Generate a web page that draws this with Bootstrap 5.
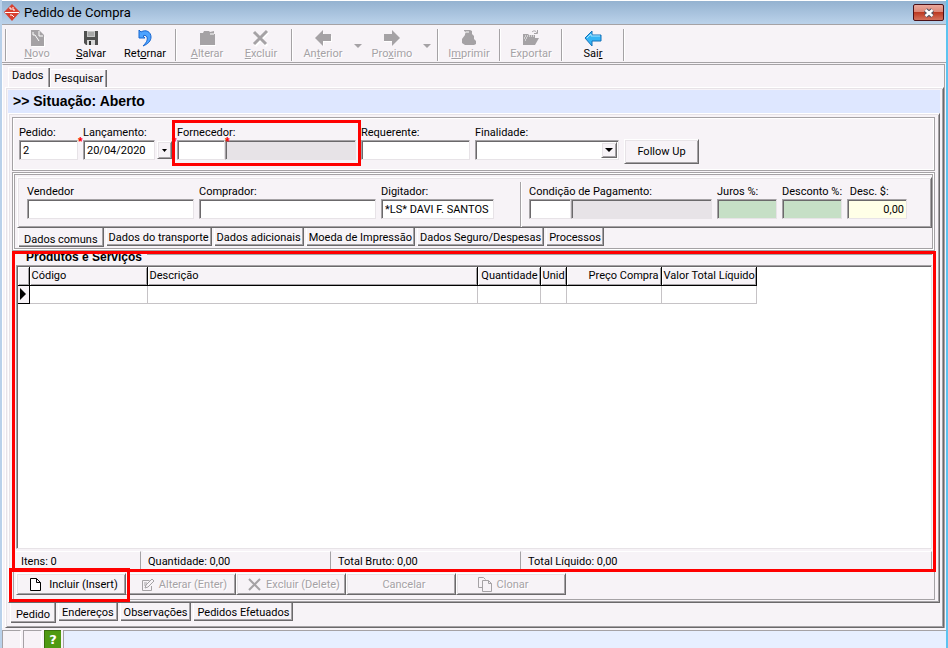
<!DOCTYPE html>
<html lang="pt-BR">
<head>
<meta charset="utf-8">
<meta name="viewport" content="width=device-width, initial-scale=1">
<title>Pedido de Compra</title>
<link href="https://cdn.jsdelivr.net/npm/bootstrap@5.3.0/dist/css/bootstrap.min.css" rel="stylesheet">
<style>
:root{--face:#f7f3f7;--lite:#e7e3e7;--mid:#a5a2a5;--dark:#6b696b;--red:#f00}
body{font-family:Roboto,"Liberation Sans",sans-serif;font-size:11px;line-height:14px;color:#000;background:var(--face);border-left:2px solid #b9d1ea;border-right:2px solid #5cc3f0}
button,input,select{font:inherit;color:inherit;border-radius:0}
.titlebar{height:25px;background:linear-gradient(#fff 1px,#94b2d0 1px,#bbd2ea);border-bottom:1px solid var(--mid);font-size:13px;padding:1px 2px 0}
.close-btn{width:31px;height:17px;border:1px solid #4a1018;border-radius:2px;background:linear-gradient(#eaa79b,#dd8878 45%,#bd3a22 50%,#d4715c)}
.toolbar{height:38px;border-bottom:1px solid var(--mid)}
.tool{width:54px;border:0;background:none;padding:0}
.tool svg,.drop svg{display:block}
.tool:disabled{color:var(--mid);text-shadow:1px 1px #fff}
.drop{width:15px;border:0;background:none;padding:0;color:var(--mid)}
.sep{width:8px;padding:0 3px}
.sep::before{content:"";display:block;height:32px;border-left:1px solid var(--mid);border-right:1px solid #fff}
.frame{margin-top:1px;border-top:1px solid var(--mid);border-right:1px solid var(--mid);border-left:1px solid #fff;margin-right:1px;padding-left:2px}
.top-tabs{height:22px;padding-left:3px}
.tab-btn{border:0;background:var(--face);height:18px;padding:1px 4px 0;white-space:nowrap;box-shadow:inset 1px 1px #fff,inset -1px 0 var(--dark),inset -2px 0 var(--mid)}
.tab-btn.active{height:20px;padding-bottom:3px;padding-right:7px}
.low .tab-btn{height:18px;padding:1px 4px 0;box-shadow:inset 1px 0 #fff,inset -1px -1px var(--dark),inset -2px -2px var(--mid)}
.low .tab-btn.active{height:19px;padding:4px 6px 0}
.raised{border:1px solid;border-color:#fff var(--dark) var(--dark) #fff;box-shadow:inset 1px 1px var(--lite),inset -1px -1px var(--mid)}
.outer-page{padding:2px 3px 1px 2px}
.strip{height:23px;background:#dee7ff;font:bold 14px/23px "Liberation Sans",Arial,sans-serif;padding-left:5px}
.inner-page{padding:3px 4px 2px 3px}
.etched{border:1px solid var(--mid);box-shadow:inset 1px 1px #fff,inset -1px -1px #fff}
.head-panel{height:54px;padding:8px 6px 0}
.fields{gap:5px}
.fields label{display:block;white-space:nowrap;line-height:14px}
.sunk{border:1px solid;border-color:var(--mid) var(--lite) var(--lite) var(--mid);box-shadow:inset 1px 1px var(--dark);background:#fff;height:20px;padding:1px 2px 1px 3px;display:block;min-width:0;outline:0}
.sunk:disabled{background:var(--lite)}
.sunk.green{background:#c6dfc6}.sunk.cream{background:#ffffe7}
.w-59{width:59px}.w-60{width:60px}.w-72{width:72px}.w-109{width:109px}.w-113{width:113px}.w-131{width:131px}.w-144{width:144px}.w-141{width:141px}.w-167{width:167px}.w-177{width:177px}.w-48{width:48px}.w-42{width:42px}
.push{background:var(--face);border:1px solid;border-color:#fff var(--dark) var(--dark) #fff;box-shadow:inset 1px 1px var(--lite),inset -1px -1px var(--mid);padding:0;white-space:nowrap}
.push:disabled{color:var(--mid);text-shadow:1px 1px #fff}
.date-row{gap:2px}
.date-btn{width:15px;height:18px}
.combo{appearance:none;width:100%}
.combo-arrow{position:absolute;right:2px;top:2px;width:16px;height:16px;pointer-events:none}
.follow{width:75px;height:25px;margin-top:13px}
.star{position:absolute;left:100%;top:-2px;color:var(--red);font:bold 12px/8px "Liberation Sans",sans-serif;z-index:1}
.hot{position:relative}
.hot::after{content:"";position:absolute;border:3px solid var(--red);pointer-events:none;z-index:2}
.hot-supplier::after{inset:-6px -5px}
.hot-items::after{inset:0 -2px 27px -2px}
.hot-insert::after{inset:-5px -4px -7px -7px;z-index:3}
.data-panel{margin-top:1px;padding:1px}
.data-box{border:1px solid var(--mid);padding:2px 0 0 2px;height:75px}
.data-page{height:51px;padding:7px 9px 0}
.divider{width:2px;height:45px;border-left:1px solid var(--mid);border-right:1px solid #fff;margin:-3px 2px 0 21px}
.low-inner{padding-left:1px;gap:2px}
.low-inner .tab-btn{padding:1px 3px 0}
.items{margin-left:1px;padding:0 2px;border-left:1px solid var(--mid);border-bottom:1px solid var(--mid);border-right:1px solid var(--mid)}
.items-title{height:14px;font:bold 12px/13px "Liberation Sans",Arial,sans-serif;padding-left:10px}
.items-title::after{content:"";flex:1;margin:3px 0 0 5px;height:1px;background:var(--mid)}
.grid-box{border:1px solid;border-color:var(--mid) var(--lite) var(--lite) var(--mid);box-shadow:inset 1px 1px var(--dark);background:#fff;padding:1px 0 0 1px}
.grid-table{border-collapse:collapse;table-layout:fixed;width:738px}
.grid-table th{height:18px;padding:0 2px;font-weight:400;white-space:nowrap;background:var(--face);border-right:1px solid #000;border-bottom:1px solid #000;box-shadow:inset 1px 1px #fff,inset -1px -1px var(--mid)}
.grid-table td{height:18px;padding:0;border-right:1px solid #c6c3c6;border-bottom:1px solid #c6c3c6}
.grid-table td.marker{background:var(--face);border-color:#000}
.grid-table svg{display:block;margin:auto}
.totals{display:grid;grid-template-columns:125px 188px 188px 1fr;column-gap:2px;height:19px;margin-top:2px}
.totals>div{border-top:1px solid #fff;border-right:1px solid var(--mid);border-bottom:1px solid var(--mid);padding:3px 6px 0 5px;white-space:nowrap}
.actions{padding:3px 0 4px}
.actions .push{width:110px;height:22px;padding-top:1px}
.actions .wide-left{padding-left:6px}
.low-outer{padding:0 0 3px 2px;gap:2px}
.low-outer .tab-btn.active{height:20px}
.statusbar{height:20px;padding-top:2px;gap:2px}
.statusbar>div{border-top:1px solid var(--mid);border-left:1px solid var(--mid)}
.cell{width:19px;border-right:1px solid #fff}
.statusbar .help{width:17px;background:#4f9a12;border-color:#396f0c;color:#fff;font:bold 13px/18px "DejaVu Sans",sans-serif}
.msg{background:#e7efff}
</style>
<script src="https://cdn.jsdelivr.net/npm/bootstrap@5.3.0/dist/js/bootstrap.bundle.min.js"></script>
</head>
<body class="d-flex flex-column min-vh-100">
<header class="titlebar d-flex align-items-center flex-shrink-0">
  <svg width="16" height="17" viewBox="0 0 16 17" class="me-1" aria-hidden="true"><path d="M8 0l8 8-8 9-8-9z" fill="#d84030"/><path d="M1 8.500h14" stroke="#fff"/><path d="M5 4h2v2M9 3v3h2M6 11h2l2 2" stroke="#fff" fill="none"/></svg>
  <span>Pedido de Compra</span>
  <button class="close-btn ms-auto p-0 d-flex align-items-center justify-content-center" aria-label="Fechar"><svg width="12" height="10" viewBox="0 0 12 10"><path d="M2.500 2l7 6M9.500 2l-7 6" stroke="#4d5262" stroke-width="4.500"/><path d="M2.500 2l7 6M9.500 2l-7 6" stroke="#fff" stroke-width="2.500"/></svg></button>
</header>

<div class="toolbar d-flex align-items-start flex-shrink-0 pt-1" role="toolbar" aria-label="Ações">
  <span class="sep"></span>
  <button class="tool" disabled><svg class="mx-auto" width="18" height="18" viewBox="0 0 18 18"><path d="M3 2h8v5h5v10H3z" fill="#fff" transform="translate(1 1)"/><path d="M3 1h8l5 5v11H3z" fill="#a5a2a5"/><path d="M5 3v3h2l4 6M11 2v5h4" stroke="#fff" fill="none"/></svg><u>N</u>ovo</button>
  <button class="tool"><svg class="mx-auto" width="18" height="18" viewBox="0 0 18 18"><path d="M2 2h14v14H4l-2-2z" fill="#505050"/><path d="M5 2h8v6H5z" fill="#c8c8c8"/><path d="M6 4h6M6 6h6" stroke="#888"/><path d="M5 11h8v5H5z" fill="#d8d8d8"/><path d="M7 12h2v4H7z" fill="#333"/></svg><u>S</u>alvar</button>
  <button class="tool"><svg class="mx-auto" width="18" height="18" viewBox="0 0 18 18"><path d="M3 1l2 2c5-3 10 0 10 5 0 4-3 7-8 9 3-3 5-6 4-9-1-2-3-2-4-1l2 2H3z" fill="#4da3ff" stroke="#1766d0"/></svg>Ret<u>o</u>rnar</button>
  <span class="sep"></span>
  <button class="tool" disabled><svg class="mx-auto" width="18" height="18" viewBox="0 0 18 18"><path d="M2 4h3l1-2h5l1 1 4-1v3h1v11H2z" fill="#a5a2a5"/><path d="M12 5h4M3 16.500h15" stroke="#fff"/></svg><u>A</u>lterar</button>
  <button class="tool" disabled><svg class="mx-auto" width="18" height="18" viewBox="0 0 18 18"><path d="M3 4l12 13M16 3L3 17" stroke="#fff" stroke-width="3"/><path d="M2 3l12 12M15 2L2 15" stroke="#a5a2a5" stroke-width="3"/></svg><u>E</u>xcluir</button>
  <span class="sep"></span>
  <button class="tool" disabled><svg class="mx-auto" width="18" height="18" viewBox="0 0 18 18"><path d="M2 10l8-7v4h8v6h-8v4z" fill="#fff"/><path d="M1 9l8-8v4h8v7H9v5z" fill="#a5a2a5"/></svg>An<u>t</u>erior</button>
  <button class="drop align-self-center" disabled aria-label="Opções de anterior"><svg class="mx-auto" width="8" height="4"><path d="M0 0h8L4 4z" fill="#a5a2a5"/></svg></button>
  <button class="tool" disabled><svg class="mx-auto" width="18" height="18" viewBox="0 0 18 18"><path d="M17 10l-8-7v4H1v6h8v4z" fill="#fff"/><path d="M17 9L9 1v4H1v7h8v5z" fill="#a5a2a5"/></svg>Pro<u>x</u>imo</button>
  <button class="drop align-self-center" disabled aria-label="Opções de próximo"><svg class="mx-auto" width="8" height="4"><path d="M0 0h8L4 4z" fill="#a5a2a5"/></svg></button>
  <span class="sep"></span>
  <button class="tool" disabled><svg class="mx-auto" width="18" height="18" viewBox="0 0 18 18"><path d="M4 1h6l2 1v3l2 2v3l2 2v3l-2 1H5l-3-2v-4l3-4V5l1-2-2-1z" fill="#a5a2a5"/><path d="M6 3h3" stroke="#fff"/></svg>I<u>m</u>primir</button>
  <span class="sep"></span>
  <button class="tool" disabled><svg class="mx-auto" width="18" height="18" viewBox="0 0 18 18"><path d="M1 5h5l1 1h6v3h4l-4 7H1z" fill="#a5a2a5"/><path d="M3 7h9M2 9h3M3 11h2" stroke="#fff" stroke-dasharray="1 1"/><path d="M10 3c2-2 4-1 5 1M15.500 1v3.500H12" stroke="#a5a2a5" fill="none"/></svg>Exportar</button>
  <span class="sep"></span>
  <button class="tool"><svg class="mx-auto" width="18" height="18" viewBox="0 0 18 18"><path d="M1 9l7-7v4h9v6H8v5z" fill="#35b5f5" stroke="#1471b8"/><path d="M3 9l4-4v2h9" stroke="#a5e4ff" fill="none"/></svg>Sai<u>r</u></button>
  <span class="sep"></span>
</div>

<main class="frame d-flex flex-column flex-grow-1">
  <div class="top-tabs d-flex align-items-end" role="tablist">
    <button class="tab-btn active" role="tab" aria-selected="true">Dados</button>
    <button class="tab-btn" role="tab" aria-selected="false">Pesquisar</button>
  </div>
  <section class="raised outer-page d-flex flex-column flex-grow-1">
    <h1 class="strip m-0">&gt;&gt; Situação: Aberto</h1>
    <div class="raised inner-page d-flex flex-column flex-grow-1">

      <form class="etched head-panel fields d-flex align-items-start">
        <div><label for="pedido">Pedido:</label><div class="position-relative"><input id="pedido" class="sunk w-59" value="2" autofocus><span class="star">*</span></div></div>
        <div><label for="lanc">Lançamento:</label><div class="position-relative date-row d-flex align-items-center"><input id="lanc" class="sunk w-72" value="20/04/2020"><button type="button" class="push date-btn d-flex align-items-center justify-content-center" aria-label="Abrir calendário"><svg width="5" height="3"><path d="M0 0h5L2.500 3z"/></svg></button><span class="star">*</span></div></div>
        <div class="hot hot-supplier"><label for="forn">Fornecedor:</label><div class="d-flex"><div class="position-relative"><input id="forn" class="sunk w-48"><span class="star">*</span></div><input class="sunk w-131" disabled aria-label="Nome do fornecedor"></div></div>
        <div><label for="req">Requerente:</label><input id="req" class="sunk w-109"></div>
        <div><label for="fin">Finalidade:</label><div class="position-relative w-144"><select id="fin" class="sunk combo"><option></option></select><span class="push combo-arrow d-flex align-items-center justify-content-center"><svg width="8" height="4"><path d="M0 0h8L4 4z"/></svg></span></div></div>
        <button type="button" class="push follow">Follow Up</button>
      </form>

      <div class="etched data-panel">
        <div class="data-box">
          <form class="raised data-page fields d-flex">
            <div><label for="vend">Vendedor</label><input id="vend" class="sunk w-167"></div>
            <div><label for="comp">Comprador:</label><input id="comp" class="sunk w-177"></div>
            <div><label for="dig">Digitador:</label><input id="dig" class="sunk w-113" value="*LS* DAVI F. SANTOS"></div>
            <div class="divider"></div>
            <div><label for="cond">Condição de Pagamento:</label><div class="d-flex"><input id="cond" class="sunk w-42"><input class="sunk w-141" disabled aria-label="Descrição da condição"></div></div>
            <div class="w-60"><label for="juros">Juros %:</label><input id="juros" class="sunk green w-60"></div>
            <div class="w-60"><label for="desp">Desconto %:</label><input id="desp" class="sunk green w-60"></div>
            <div class="w-60"><label for="desv">&nbsp;Desc. $:</label><input id="desv" class="sunk cream w-60 text-end" value="0,00"></div>
          </form>
          <div class="low low-inner d-flex" role="tablist">
            <button class="tab-btn active" role="tab" aria-selected="true">Dados comuns</button>
            <button class="tab-btn" role="tab">Dados do transporte</button>
            <button class="tab-btn" role="tab">Dados adicionais</button>
            <button class="tab-btn" role="tab">Moeda de Impressão</button>
            <button class="tab-btn" role="tab">Dados Seguro/Despesas</button>
            <button class="tab-btn" role="tab">Processos</button>
          </div>
        </div>
      </div>

      <section class="items hot hot-items d-flex flex-column flex-grow-1">
        <h2 class="items-title d-flex m-0">Produtos e Serviços</h2>
        <div class="grid-box flex-grow-1">
          <table class="grid-table">
            <colgroup><col style="width:11px"><col style="width:118px"><col style="width:330px"><col style="width:63px"><col style="width:26px"><col style="width:95px"><col style="width:95px"></colgroup>
            <thead><tr><th></th><th>Código</th><th>Descrição</th><th class="text-end">Quantidade</th><th>Unid</th><th class="text-end">Preço Compra</th><th class="text-end">Valor Total Líquido</th></tr></thead>
            <tbody><tr><td class="marker"><svg width="6" height="12"><path d="M0 0l6 6-6 6z"/></svg></td><td></td><td></td><td></td><td></td><td></td><td></td></tr></tbody>
          </table>
        </div>
        <div class="totals"><div>Itens: 0</div><div>Quantidade: 0,00</div><div>Total Bruto: 0,00</div><div>Total Líquido: 0,00</div></div>
        <div class="actions d-flex">
          <div class="hot hot-insert"><button class="push wide-left d-flex align-items-center justify-content-center gap-1"><svg width="11" height="13" viewBox="0 0 11 13" class="me-1"><path d="M.5.5h6l4 4v8H.5zM6.500.5v4h4" fill="#fff" stroke="#000"/></svg>Incluir (Insert)</button></div>
          <button class="push wide-left d-flex align-items-center justify-content-center gap-1" disabled><svg width="14" height="14" viewBox="0 0 14 14"><path d="M8.500 2.500H1.500v10h9V8M4 10l1-3 6-6 2 2-6 6zM3 5h3M3 7h2" fill="none" stroke="#a5a2a5"/></svg>Alterar (Enter)</button>
          <button class="push wide-left d-flex align-items-center justify-content-center gap-1" disabled><svg width="14" height="13" viewBox="0 0 14 13"><path d="M1 1l11 11M12 1L1 12" fill="none" stroke="#a5a2a5" stroke-width="2"/></svg>Excluir (Delete)</button>
          <button class="push wide-left" disabled>Cancelar</button>
          <button class="push d-flex align-items-center justify-content-center gap-1 pe-3" disabled><svg width="15" height="15" viewBox="0 0 15 15"><path d="M4.500 10.500h-4V.5h5l2 2M4.500 3.500h6l3 3v8h-9zM10.500 3.500v3h3" fill="none" stroke="#a5a2a5"/></svg>Clonar</button>
        </div>
      </section>
    </div>
    <div class="low low-outer d-flex" role="tablist">
      <button class="tab-btn active" role="tab" aria-selected="true">Pedido</button>
      <button class="tab-btn" role="tab">Endereços</button>
      <button class="tab-btn" role="tab">Observações</button>
      <button class="tab-btn" role="tab">Pedidos Efetuados</button>
    </div>
  </section>
</main>

<footer class="statusbar d-flex flex-shrink-0">
  <div class="cell"></div><div class="cell"></div><div class="help text-center">?</div><div class="msg flex-grow-1"></div>
</footer>
</body>
</html>
